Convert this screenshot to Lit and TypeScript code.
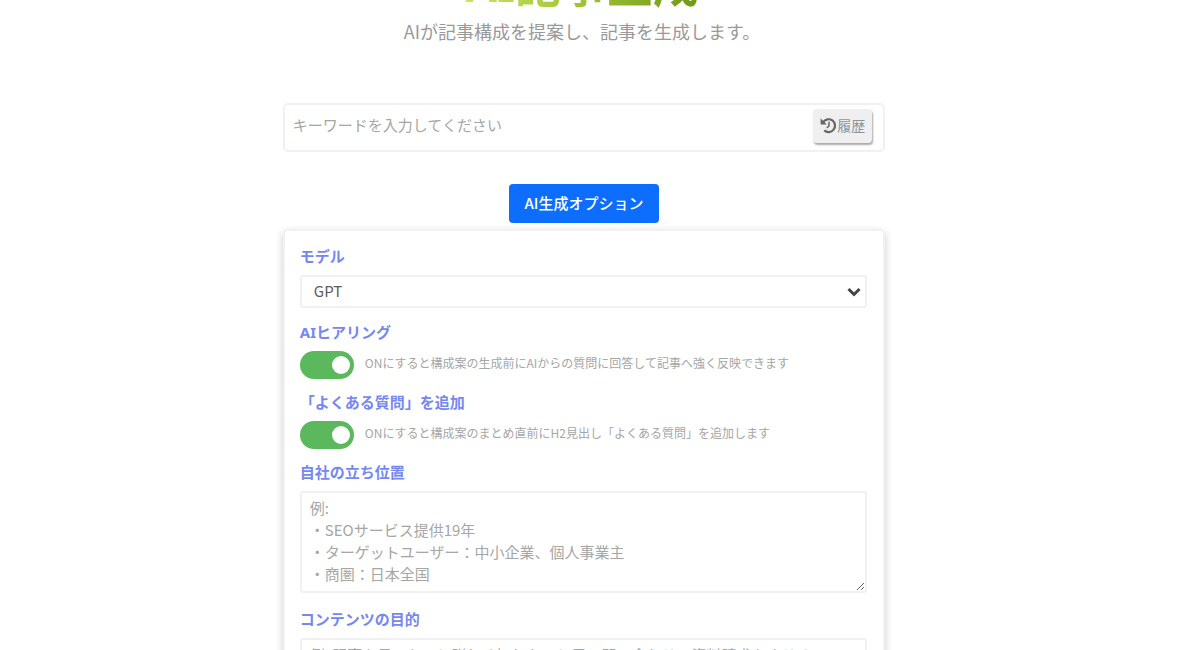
import { LitElement, html, css } from "lit";
import { customElement } from "lit/decorators.js";

@customElement("app-root")
export class AppRoot extends LitElement {
  static styles = css`
    :host {
      display: block;
      height: 100vh;
      overflow: hidden;
      background: #fff;
      color: #555;
      font-family: "Noto Sans CJK JP", sans-serif;
    }
    * { box-sizing: border-box; }
    .page {
      width: 50.2%;
      min-width: 320px;
      margin: 0 auto;
      position: relative;
      right: 16px;
    }
    header { text-align: center; margin: -49px 0 0; padding-right: 4px; }
    h1 {
      width: fit-content;
      margin: 0 auto;
      font-family: "Noto Sans", "Noto Sans CJK JP", sans-serif;
      font-size: 46px;
      line-height: 66px;
      font-weight: 700;
      color: transparent;
      background: linear-gradient(90deg, #cbe55e, #9fc238 50%, #6f9a16);
      background-clip: text;
      -webkit-background-clip: text;
    }
    .lead { margin: 0; font-size: 18px; line-height: 28px; color: #999; }
    .search {
      display: flex;
      align-items: center;
      height: 49px;
      margin-top: 58px;
      padding: 0 11px 3px 8px;
      border: 2px solid #eff1f3;
      border-radius: 5px;
    }
    .keyword {
      flex: 1;
      min-width: 0;
      height: 32px;
      padding: 0 0 4px;
      border: 0;
      outline: 0;
      background: none;
      font: 15px "Noto Sans CJK JP", sans-serif;
    }
    ::placeholder { color: #a6a6a6; opacity: 1; }
    .history {
      display: flex;
      align-items: center;
      justify-content: center;
      width: 59px;
      height: 34px;
      padding: 0 0 2px;
      border: 0;
      border-radius: 4px;
      background: #efefef;
      box-shadow: 1px 2px 2px #aaa;
      font: 14px "Noto Sans CJK JP", sans-serif;
      color: #8b939b;
    }
    .history svg { width: 17px; height: 17px; color: #666; }
    .options {
      display: block;
      margin: 32px auto 0;
      height: 39px;
      padding: 0 16px 2px;
      border: 0;
      border-radius: 4px;
      background: #0d6efd;
      color: #fff;
      font: 500 15px "Noto Sans CJK JP", sans-serif;
    }
    .card {
      margin-top: 6px;
      padding: 13px 16px 24px 15px;
      border: 2px solid #eff1f3;
      border-radius: 5px;
      box-shadow: 0 3px 8px #0003;
    }
    .label {
      display: block;
      font-family: "Noto Sans", "Noto Sans CJK JP", sans-serif;
      font-size: 15px;
      line-height: 24px;
      font-weight: 700;
      color: #7488ef;
    }
    .select-wrap { display: grid; align-items: center; margin: 7px 0 12px; }
    .select-wrap > * { grid-area: 1 / 1; }
    select {
      appearance: none;
      width: 100%;
      height: 33px;
      padding: 0 12px 2px;
      border: 2px solid #eff1f3;
      border-radius: 3px;
      background: #fff;
      color: #5c5c5c;
      font: 15px "Noto Sans CJK JP", sans-serif;
    }
    .arrow { justify-self: end; width: 14px; height: 10px; margin-right: 6px; color: #444; pointer-events: none; }
    .toggle { display: flex; align-items: center; gap: 11px; margin: 7px 0 11px; height: 28px; }
    .switch {
      appearance: none;
      flex: none;
      display: flex;
      align-items: center;
      justify-content: flex-end;
      width: 54px;
      height: 28px;
      margin: 0;
      padding: 0 4px;
      border-radius: 14px;
      background: #5cb85c;
    }
    .switch::before { content: ""; width: 18px; height: 18px; border-radius: 50%; background: #fff; }
    .switch:not(:checked) { justify-content: flex-start; background: #ccc; }
    .hint { font-size: 12px; line-height: 18px; color: #a6a6a6; padding-bottom: 4px; }
    textarea {
      display: block;
      width: 100%;
      height: 102px;
      margin: 7px 0 14px;
      padding: 4px 8px;
      border: 2px solid #eff1f3;
      border-radius: 3px;
      font: 15px/22px "Noto Sans CJK JP", sans-serif;
    }
  `;

  render() {
    return html`
      <main class="page">
        <header>
          <h1>AI記事生成</h1>
          <p class="lead">AIが記事構成を提案し、記事を生成します。</p>
        </header>
        <div class="search">
          <input class="keyword" type="text" aria-label="キーワード" placeholder="キーワードを入力してください" />
          <button class="history" type="button">
            <svg viewBox="0 0 17 17" fill="none" stroke="currentColor" aria-hidden="true">
              <path d="M3.2 5.2A6.4 6.4 0 1 1 4.3 13.4" stroke-width="2.2" />
              <path d="M0.6 1.2V7.4H6.8Z" fill="currentColor" stroke="none" />
              <path d="M9 4.8V9L6.8 10.8" stroke-width="1.5" />
            </svg>履歴
          </button>
        </div>
        <button class="options" type="button">AI生成オプション</button>
        <section class="card">
          <label class="label" for="model">モデル</label>
          <div class="select-wrap">
            <select id="model"><option>GPT</option></select>
            <svg class="arrow" viewBox="0 0 14 10" fill="none" stroke="currentColor" stroke-width="3" aria-hidden="true">
              <path d="M1.5 2L7 7.5L12.5 2" />
            </svg>
          </div>
          <label class="label" for="hearing">AIヒアリング</label>
          <div class="toggle">
            <input class="switch" id="hearing" type="checkbox" role="switch" checked />
            <span class="hint">ONにすると構成案の生成前にAIからの質問に回答して記事へ強く反映できます</span>
          </div>
          <label class="label" for="faq">「よくある質問」を追加</label>
          <div class="toggle">
            <input class="switch" id="faq" type="checkbox" role="switch" checked />
            <span class="hint">ONにすると構成案のまとめ直前にH2見出し「よくある質問」を追加します</span>
          </div>
          <label class="label" for="position">自社の立ち位置</label>
          <textarea id="position" placeholder="例:&#10;・SEOサービス提供19年&#10;・ターゲットユーザー：中小企業、個人事業主&#10;・商圏：日本全国"></textarea>
          <label class="label" for="goal">コンテンツの目的</label>
          <textarea id="goal" placeholder="例: 記事を見てもっと詳しく知りたいと思い問い合わせ・資料請求をさせる"></textarea>
        </section>
      </main>
    `;
  }
}
